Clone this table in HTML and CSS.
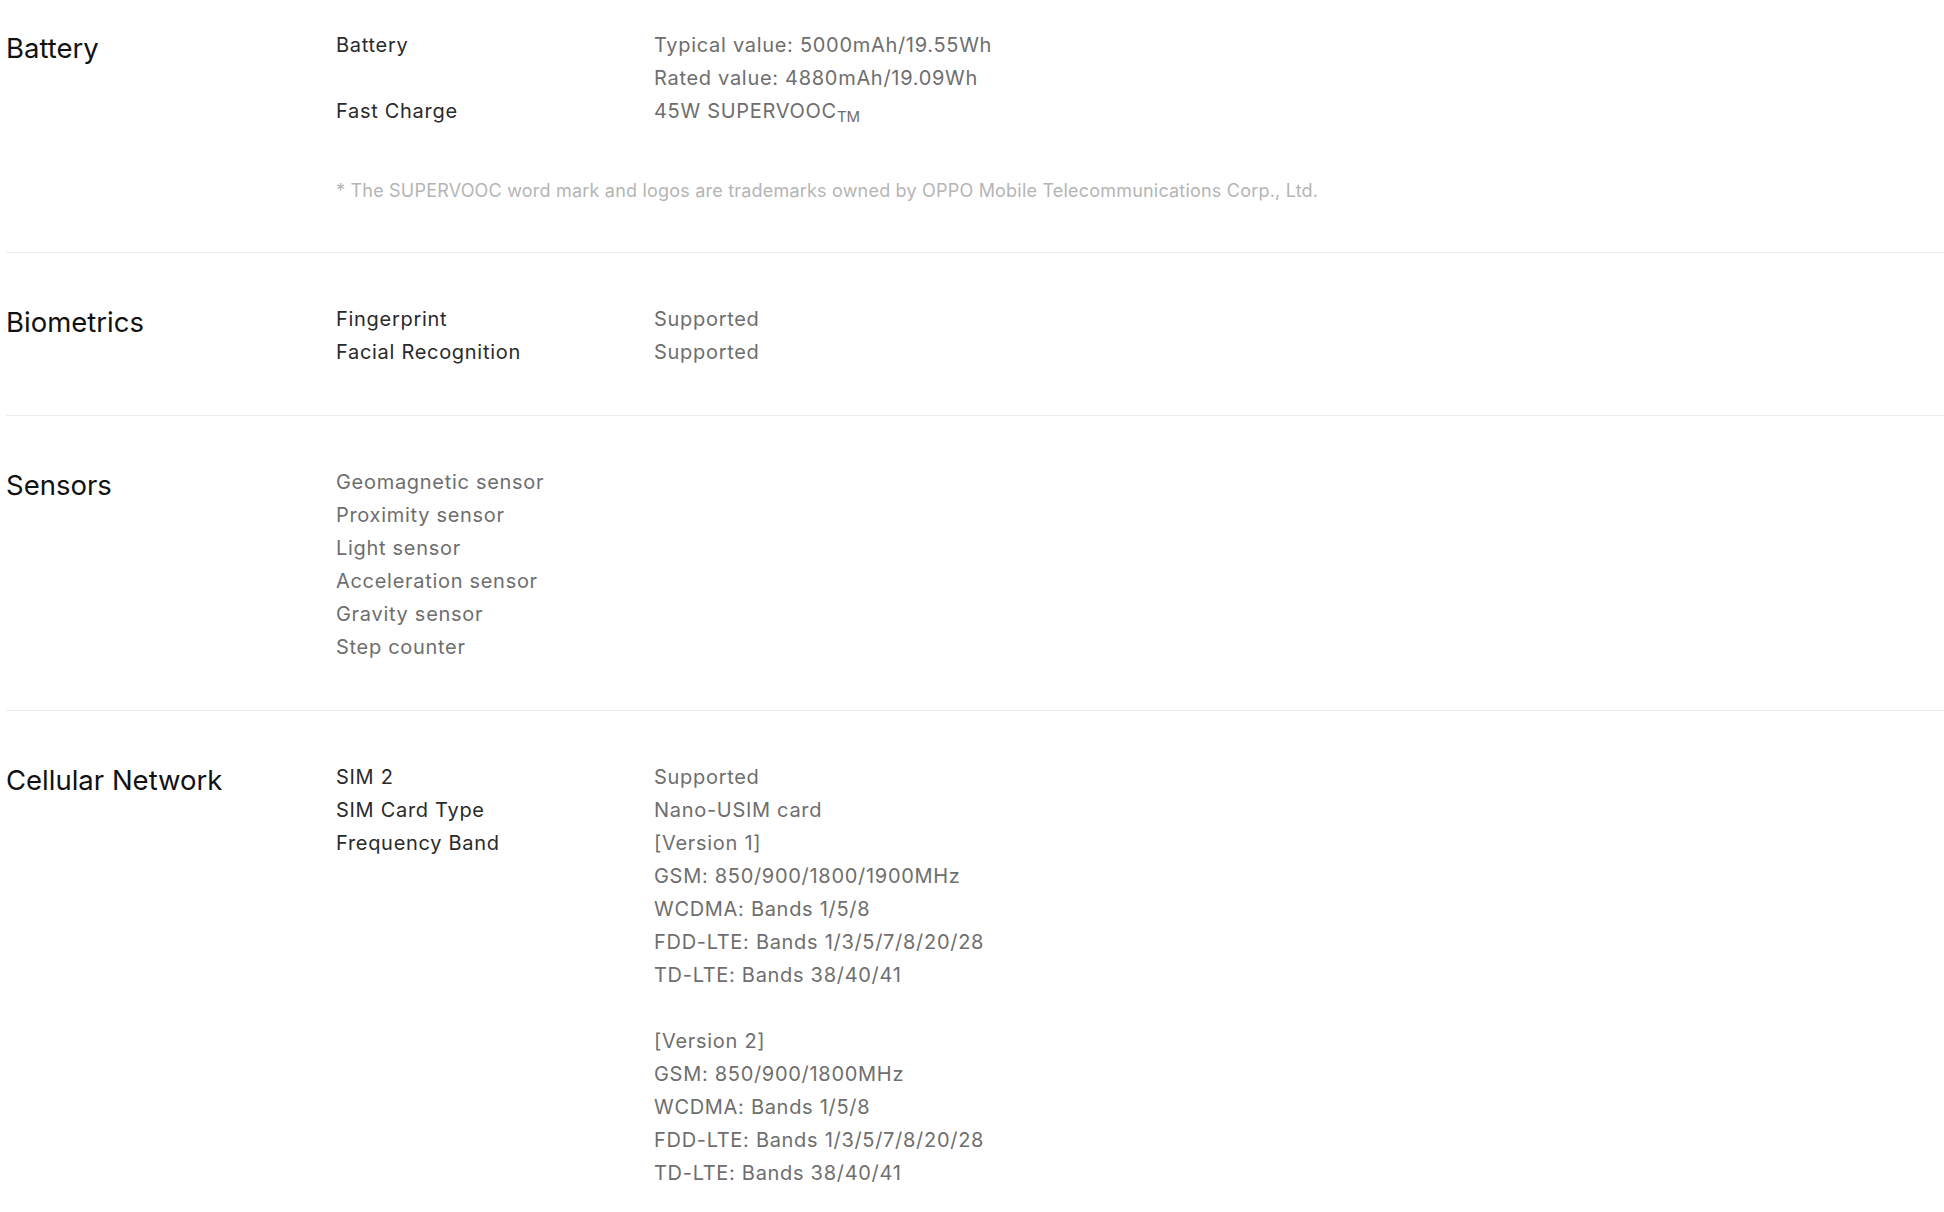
FILE: index.html
```html
<!DOCTYPE html>
<html lang="en">
<head>
<meta charset="utf-8">
<title>Specs</title>
<link rel="stylesheet" href="styles.css">
</head>
<body>
<div class="specs">
  <section class="spec first">
    <h2 class="spec-title">Battery</h2>
    <div class="spec-body">
      <dl class="rows">
        <dt>Battery</dt>
        <dd>Typical value: 5000mAh/19.55Wh<br>Rated value: 4880mAh/19.09Wh</dd>
        <dt>Fast Charge</dt>
        <dd>45W SUPERVOOC<sub class="tm">TM</sub></dd>
      </dl>
      <p class="note">* The SUPERVOOC word mark and logos are trademarks owned by OPPO Mobile Telecommunications Corp., Ltd.</p>
    </div>
  </section>
  <section class="spec">
    <h2 class="spec-title">Biometrics</h2>
    <div class="spec-body">
      <dl class="rows">
        <dt>Fingerprint</dt>
        <dd>Supported</dd>
        <dt>Facial Recognition</dt>
        <dd>Supported</dd>
      </dl>
    </div>
  </section>
  <section class="spec">
    <h2 class="spec-title">Sensors</h2>
    <div class="spec-body">
      <ul class="list">
        <li>Geomagnetic sensor</li>
        <li>Proximity sensor</li>
        <li>Light sensor</li>
        <li>Acceleration sensor</li>
        <li>Gravity sensor</li>
        <li>Step counter</li>
      </ul>
    </div>
  </section>
  <section class="spec">
    <h2 class="spec-title">Cellular Network</h2>
    <div class="spec-body">
      <dl class="rows">
        <dt>SIM 2</dt>
        <dd>Supported</dd>
        <dt>SIM Card Type</dt>
        <dd>Nano-USIM card</dd>
        <dt>Frequency Band</dt>
        <dd>[Version 1]<br>GSM: 850/900/1800/1900MHz<br>WCDMA: Bands 1/5/8<br>FDD-LTE: Bands 1/3/5/7/8/20/28<br>TD-LTE: Bands 38/40/41<br><br>[Version 2]<br>GSM: 850/900/1800MHz<br>WCDMA: Bands 1/5/8<br>FDD-LTE: Bands 1/3/5/7/8/20/28<br>TD-LTE: Bands 38/40/41</dd>
      </dl>
    </div>
  </section>
</div>
</body>
</html>
```
FILE: styles.css
```css
html, body {
  margin: 0;
  padding: 0;
  background: #ffffff;
}
body {
  font-family: Inter, "Liberation Sans", sans-serif;
  -webkit-font-smoothing: antialiased;
}
.specs {
  padding-left: 6px;
}
.spec {
  display: grid;
  grid-template-columns: 330px 1fr;
  padding: 50px 0 46px;
  border-bottom: 1px solid #ececec;
}
.spec.first {
  padding-top: 29px;
  padding-bottom: 49px;
}
.spec-title {
  margin: 0;
  padding-top: 1px;
  font-size: 27.5px;
  line-height: 36px;
  font-weight: 400;
  color: #111111;
}
.spec-body {
  font-size: 20px;
  line-height: 33px;
  letter-spacing: 0.7px;
}
.rows {
  display: grid;
  grid-template-columns: 318px 1fr;
  margin: 0;
}
.rows dt {
  color: #2a2a2a;
  margin: 0;
}
.rows dd {
  color: #6e6e6e;
  margin: 0;
}
.tm {
  font-size: 15px;
  line-height: 0;
  letter-spacing: 0;
  vertical-align: -4px;
}
.list {
  list-style: none;
  margin: 0;
  padding: 0;
  color: #6e6e6e;
}
.note {
  margin: 51px 0 0;
  font-size: 18px;
  line-height: 24px;
  letter-spacing: 0.2px;
  color: #b5b5b5;
}
```
